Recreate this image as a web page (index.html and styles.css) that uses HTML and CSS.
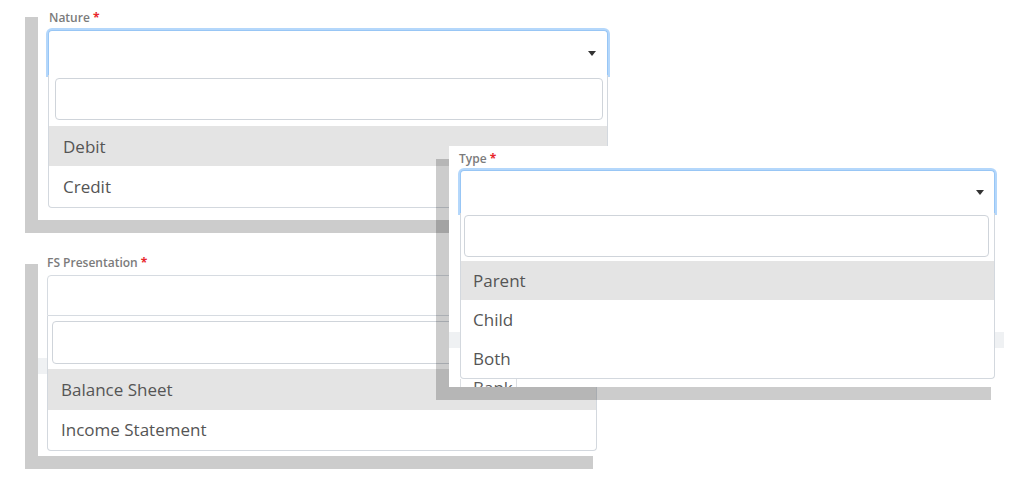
FILE: index.html
```html
<!DOCTYPE html>
<html lang="en">
<head>
<meta charset="utf-8">
<title>Select dropdowns</title>
<link rel="stylesheet" href="styles.css">
</head>
<body>
<div class="canvas">

  <section class="card card-nature">
    <div class="label">Nature <span class="req">*</span></div>
    <div class="select focused">
      <span class="arrow"></span>
    </div>
    <div class="dropdown">
      <div class="search"><div class="search-input"></div></div>
      <ul class="options">
        <li class="opt active">Debit</li>
        <li class="opt">Credit</li>
      </ul>
    </div>
  </section>

  <section class="card card-fs">
    <div class="underlay"></div>
    <div class="label">FS Presentation <span class="req">*</span></div>
    <div class="select plain"></div>
    <div class="dropdown">
      <div class="search"><div class="search-input"></div></div>
      <ul class="options">
        <li class="opt active">Balance Sheet</li>
        <li class="opt">Income Statement</li>
      </ul>
    </div>
  </section>

  <section class="card card-type">
    <div class="underlay"></div>
    <div class="label">Type <span class="req">*</span></div>
    <div class="select focused">
      <span class="arrow"></span>
    </div>
    <div class="dropdown">
      <div class="search"><div class="search-input"></div></div>
      <ul class="options">
        <li class="opt active">Parent</li>
        <li class="opt">Child</li>
        <li class="opt">Both</li>
      </ul>
    </div>
    <div class="peek-tab">Bank</div>
  </section>

</div>
</body>
</html>
```

FILE: styles.css
```css
* { box-sizing: border-box; }

html, body {
  margin: 0;
  padding: 0;
  background: #ffffff;
}

.canvas {
  position: relative;
  width: 1024px;
  height: 495px;
  overflow: hidden;
  background: #ffffff;
  font-family: "Open Sans", "Noto Sans", "DejaVu Sans", sans-serif;
}

/* screenshot "windows" placed on the collage */
.card {
  position: absolute;
  background: #ffffff;
  box-shadow: -13px 13px 0 rgba(0, 0, 0, 0.2);
  overflow: hidden;
  display: flex;
  flex-direction: column;
  align-items: flex-start;
}

.card > * { flex-shrink: 0; }

.label {
  font-size: 12px;
  font-weight: 600;
  line-height: 14px;
  color: #7b7b7b;
  white-space: nowrap;
}

.req {
  color: #e8262b;
  font-weight: 700;
}

.select {
  display: flex;
  align-items: center;
  justify-content: flex-end;
  background: #ffffff;
  border-radius: 4px 4px 0 0;
}

.select.focused {
  border: 1px solid #98c6f5;
  border-bottom: none;
  box-shadow: 0 0 0 2px #b4d7fb;
}

.select.plain {
  border: 1px solid #d6dbe1;
}

.arrow {
  width: 0;
  height: 0;
  border-left: 4px solid transparent;
  border-right: 4px solid transparent;
  border-top: 5px solid #333333;
}

.dropdown {
  position: relative;
  background: #ffffff;
  border: 1px solid #d3d8de;
  border-top: none;
  border-radius: 0 0 4px 4px;
}

.search-input {
  background: #ffffff;
  border: 1px solid #cfd4da;
  border-radius: 4px;
}

.options {
  list-style: none;
  margin: 0;
  padding: 0;
}

.opt {
  display: flex;
  align-items: center;
  font-size: 17px;
  color: #555555;
  white-space: nowrap;
}

.opt.active {
  background: #e4e4e4;
}

.underlay {
  position: absolute;
  left: 0;
  right: 0;
  height: 16px;
  background: #eff1f3;
}

/* ---------- Nature ---------- */
.card-nature {
  left: 38px;
  top: 4px;
  width: 576px;
  height: 216px;
  padding-top: 7px;
}
.card-nature .label { margin-left: 11px; }
.card-nature .select {
  margin: 5px 0 0 10px;
  width: 560px;
  height: 45px;
  padding-right: 11px;
}
.card-nature .dropdown {
  margin-left: 10px;
  width: 560px;
}
.card-nature .search { padding: 3px 4px 6px 6px; }
.card-nature .search-input { height: 42px; }
.card-nature .options { padding-bottom: 1px; }
.card-nature .opt { height: 40px; padding-left: 14px; }

/* ---------- FS Presentation ---------- */
.card-fs {
  left: 38px;
  top: 251px;
  width: 568px;
  height: 205px;
  padding-top: 5px;
}
.card-fs .underlay { top: 107px; }
.card-fs .label { margin-left: 9px; }
.card-fs .select {
  margin: 5px 0 0 9px;
  width: 550px;
  height: 41px;
}
.card-fs .dropdown {
  margin-left: 9px;
  width: 550px;
}
.card-fs .search { padding: 5px 4px 5px 4px; }
.card-fs .search-input { height: 43px; }
.card-fs .opt { height: 40.5px; padding-left: 13px; }

/* ---------- Type ---------- */
.card-type {
  left: 449px;
  top: 146px;
  width: 555px;
  height: 241px;
  padding-top: 6px;
}
.card-type .underlay { top: 186px; }
.card-type .label { margin-left: 10px; }
.card-type .select {
  margin: 4px 0 0 11px;
  width: 535px;
  height: 43px;
  padding-right: 10px;
}
.card-type .dropdown {
  margin-left: 11px;
  width: 535px;
}
.card-type .search { padding: 2px 5px 4px 3px; }
.card-type .search-input { height: 42px; }
.card-type .opt { height: 39px; padding-left: 12px; }

.peek-tab {
  margin-left: 11px;
  width: 57px;
  height: 30px;
  padding: 0 0 0 12px;
  border: 1px solid #dcdfe3;
  border-top: none;
  font-size: 17px;
  line-height: 17px;
  color: #5c5c5c;
}
```
